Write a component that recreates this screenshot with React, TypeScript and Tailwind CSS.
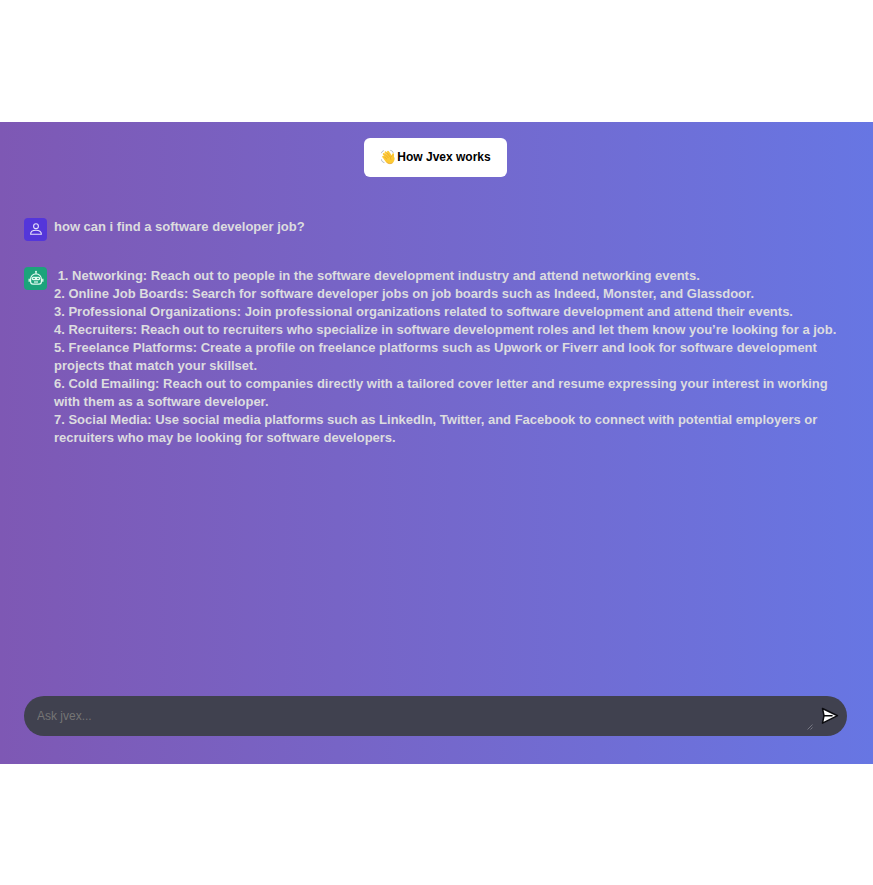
import { useState } from "react";

const answer = ` 1. Networking: Reach out to people in the software development industry and attend networking events.
2. Online Job Boards: Search for software developer jobs on job boards such as Indeed, Monster, and Glassdoor.
3. Professional Organizations: Join professional organizations related to software development and attend their events.
4. Recruiters: Reach out to recruiters who specialize in software development roles and let them know you’re looking for a job.
5. Freelance Platforms: Create a profile on freelance platforms such as Upwork or Fiverr and look for software development projects that match your skillset.
6. Cold Emailing: Reach out to companies directly with a tailored cover letter and resume expressing your interest in working with them as a software developer.
7. Social Media: Use social media platforms such as LinkedIn, Twitter, and Facebook to connect with potential employers or recruiters who may be looking for software developers.`;

function UserIcon() {
  return (
    <svg viewBox="0 0 14 14" className="size-3.5" fill="none" stroke="#e6e2fb" strokeWidth="1.1">
      <circle cx="7" cy="4.2" r="2.4" />
      <path d="M1.6 12.2c0-2.600 2.200-3.900 5.400-3.900s5.400 1.300 5.400 3.900Z" strokeLinejoin="round" />
    </svg>
  );
}

function BotIcon() {
  return (
    <svg viewBox="0 0 16 16" className="size-4" fill="none" stroke="#e4fbf1" strokeWidth="1.2">
      <circle cx="8" cy="1.6" r=".9" fill="#e4fbf1" stroke="none" />
      <path d="M8 1.500v2.300M2.600 9a5.400 5.200 0 0 1 10.800 0v2.800c0 1.500-.9 2.400-2.400 2.400H5c-1.500 0-2.400-.9-2.400-2.400Z" />
      <path d="M1.200 8.800v3M14.800 8.800v3" strokeWidth="1.300" />
      <rect x="3.700" y="6.700" width="8.600" height="3.500" rx="1.600" fill="#e4fbf1" stroke="none" />
      <path d="m5 8.900 1-.9 1 .9M9 8.900l1-.9 1 .9" stroke="#1c9f78" strokeWidth=".8" />
      <path d="M6 12h4" />
    </svg>
  );
}

function WaveIcon() {
  return (
    <svg viewBox="0 0 16 16" className="size-4" aria-hidden="true" fill="none">
      <g stroke="#fcc934" strokeWidth="2" strokeLinecap="round">
        <path d="m3.800 5 4.200 4.600M5.600 3.300 9.500 8M8 2.800 11 7M3.200 7.700 7 11" />
        <path d="M13.100 5.200c-.5 1.600-.2 3 .3 4.500" />
      </g>
      <path d="M11.200 6.500 14.300 8.500c.6 2.300-.2 4.600-2.200 5.700-2.200 1.200-4.600.4-6.400-1.500L3.400 9.600l2.900-3.300Z" fill="#fcc934" />
      <path d="m5 5.200 3.200 3.500M7 4l3 3.700M4.300 7.700l2.500 2.400M12 6.800c-1.500.8-1.900 2.100-1.200 3.600M6.600 13.300c1.700 1.600 4 1.900 5.700.8" stroke="#e49b27" strokeWidth=".6" strokeLinecap="round" />
      <path d="M10.800 1.500c1.200.2 2 .9 2.300 2M1.500 10.800c.2 1.500 1.100 2.400 2.500 2.700M1.500 3.800c.3-1 .9-1.700 1.900-2" stroke="#a3adb5" strokeWidth=".9" strokeLinecap="round" />
    </svg>
  );
}

function SendIcon() {
  return (
    <svg viewBox="0 0 18 18" className="size-[18px]" fill="#fff" stroke="#0b0b0f" strokeWidth="1.500" strokeLinejoin="round" strokeLinecap="round">
      <path d="M1.500 1.500 16.500 8.700 1.500 16.200l1.500-7.500Z" />
      <path d="M3 8.700h8" />
    </svg>
  );
}

export default function App() {
  const [question, setQuestion] = useState("");
  return (
    <div className="flex min-h-screen flex-col justify-center bg-white font-['Liberation_Sans',Arial,sans-serif]">
      <main className="flex min-h-[642px] flex-col bg-linear-to-r from-[#7e58b4] to-[#6776e3] pt-4 pr-[26px] pb-7 pl-6">
        <button type="button" className="flex h-[39px] items-center gap-px self-center rounded-md bg-white px-4 text-xs font-bold text-black">
          <WaveIcon />
          How Jvex works
        </button>
        <section className="mt-[41px] flex flex-1 flex-col gap-[26px] text-[13px] leading-[18px] font-bold text-[#dcdcdf]">
          <div className="flex gap-[7px]">
            <span className="flex size-[23px] shrink-0 items-center justify-center rounded bg-[#5436da]"><UserIcon /></span>
            <p>how can i find a software developer job?</p>
          </div>
          <div className="flex gap-[7px]">
            <span className="flex size-[23px] shrink-0 items-center justify-center rounded bg-[#1ca37b]"><BotIcon /></span>
            <p className="whitespace-pre-wrap">{answer}</p>
          </div>
        </section>
        <form className="flex h-10 items-center gap-2 rounded-full bg-[#40414f] pr-2 pl-[13px]" onSubmit={(e) => e.preventDefault()}>
          <span className="relative flex flex-1">
            <textarea
              aria-label="Ask jvex"
              placeholder="Ask jvex..."
              rows={1}
              value={question}
              onChange={(e) => setQuestion(e.target.value)}
              className="h-7 flex-1 resize-none overflow-hidden bg-transparent py-1 text-xs leading-5 text-white outline-none placeholder:text-[#757575]"
            />
            <svg viewBox="0 0 6 6" className="pointer-events-none absolute right-0 bottom-0 size-1.5" stroke="#8d8e96" strokeWidth=".7" aria-hidden="true">
              <path d="M.5 5.500 5.500.5M3.500 5.500l2-2" />
            </svg>
          </span>
          <button type="submit" aria-label="Send"><SendIcon /></button>
        </form>
      </main>
    </div>
  );
}
